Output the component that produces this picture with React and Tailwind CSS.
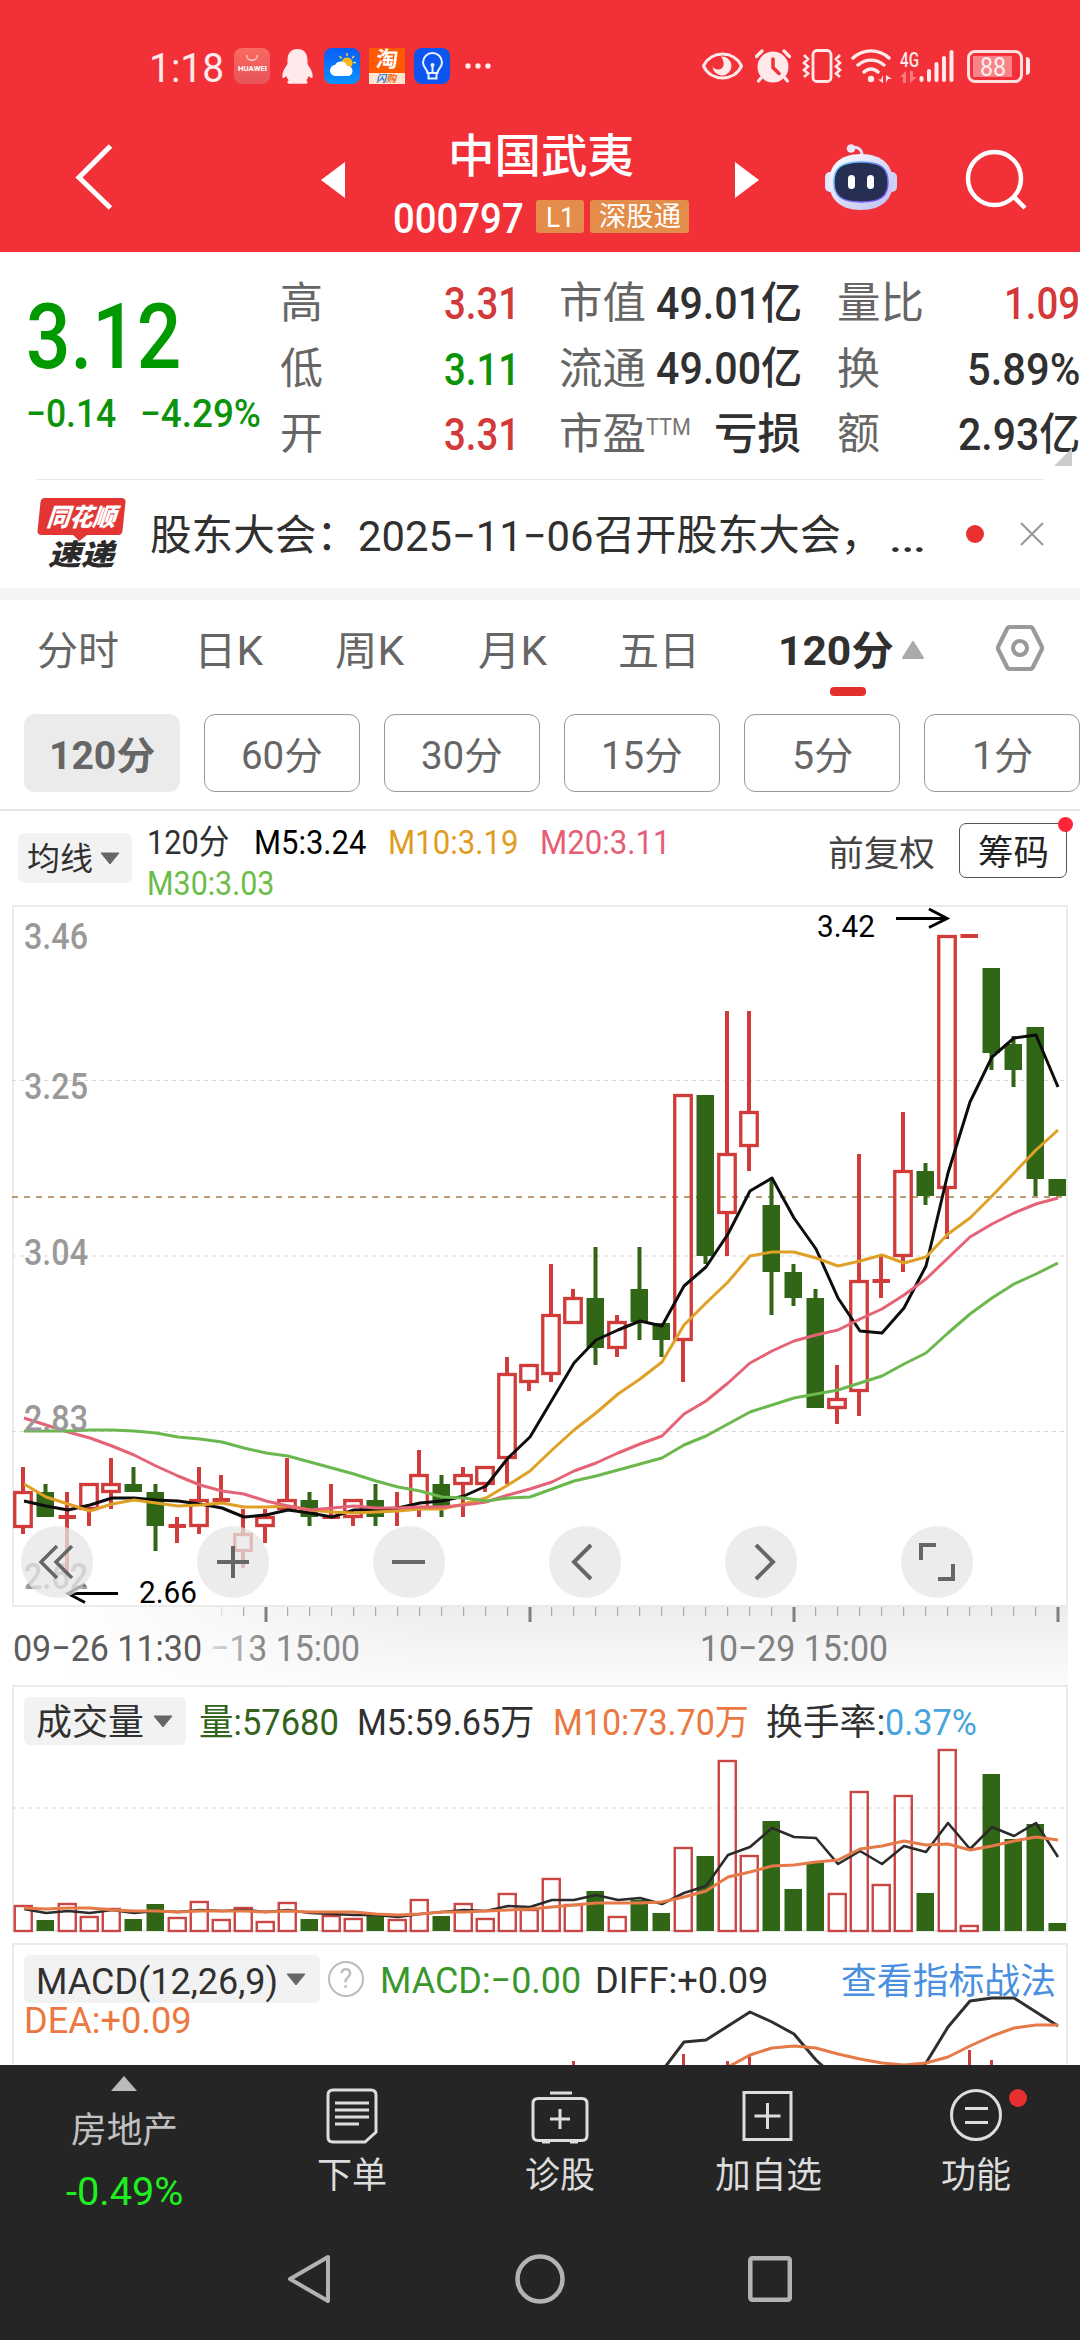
import { useLayoutEffect, useRef, useState } from "react";

// Stretches or squeezes one line of text to the width of its own box
function Fit({ className = "", children }) {
  const box = useRef(null);
  const text = useRef(null);
  const [scale, setScale] = useState(1);

  useLayoutEffect(() => {
    if (text.current.offsetWidth > 0) {
      setScale(box.current.clientWidth / text.current.offsetWidth);
    }
  }, [children]);

  return (
    <div ref={box} className={"shrink-0 whitespace-nowrap leading-none " + className}>
      <span ref={text} className="inline-block origin-left" style={{ transform: `translateY(0.045em) scaleX(${scale})` }}>
        {children}
      </span>
    </div>
  );
}

// [type, high, top, bottom, low], type: r = up, g = down, x = cross
const candles = [
  ["r", 1467, 1491, 1528, 1534], ["g", 1484, 1492, 1517, 1517], ["x", 1492, 1517, 1517, 1575],
  ["r", 1483, 1483, 1510, 1526], ["r", 1458, 1483, 1493, 1509], ["g", 1467, 1484, 1492, 1492],
  ["g", 1484, 1492, 1526, 1551], ["x", 1517, 1526, 1526, 1543], ["r", 1467, 1499, 1527, 1534],
  ["x", 1475, 1500, 1500, 1501], ["r", 1509, 1533, 1552, 1568], ["r", 1509, 1516, 1527, 1543],
  ["r", 1458, 1499, 1510, 1510], ["g", 1492, 1500, 1517, 1526], ["x", 1484, 1517, 1517, 1518],
  ["r", 1499, 1499, 1518, 1526], ["g", 1484, 1500, 1517, 1526], ["x", 1492, 1509, 1509, 1526],
  ["r", 1450, 1474, 1509, 1517], ["g", 1475, 1484, 1508, 1517], ["r", 1467, 1474, 1485, 1517],
  ["r", 1466, 1466, 1485, 1492], ["r", 1357, 1373, 1459, 1484], ["r", 1364, 1364, 1383, 1391],
  ["r", 1264, 1314, 1375, 1382], ["r", 1289, 1297, 1324, 1324], ["g", 1247, 1298, 1348, 1365],
  ["r", 1315, 1321, 1349, 1357], ["g", 1247, 1289, 1322, 1340], ["g", 1323, 1323, 1340, 1357],
  ["r", 1094, 1094, 1341, 1382], ["g", 1095, 1095, 1256, 1264], ["r", 1011, 1153, 1214, 1256],
  ["r", 1011, 1111, 1147, 1171], ["g", 1178, 1205, 1272, 1315], ["g", 1264, 1272, 1298, 1306],
  ["g", 1289, 1298, 1408, 1408], ["r", 1365, 1398, 1409, 1424], ["r", 1154, 1280, 1392, 1416],
  ["x", 1255, 1281, 1281, 1298], ["r", 1112, 1170, 1257, 1272], ["g", 1163, 1171, 1196, 1205],
  ["r", 935, 935, 1189, 1239], ["x", 936, 936, 936, 936], ["g", 968, 968, 1053, 1070],
  ["g", 1036, 1044, 1070, 1087], ["g", 1027, 1027, 1179, 1196], ["g", 1179, 1179, 1196, 1196],
];

const ma5 = [1501, 1506, 1510, 1505, 1498, 1498, 1500, 1501, 1504, 1508, 1517, 1515, 1510, 1513, 1517, 1510, 1509.5, 1508, 1503, 1501, 1496, 1486, 1458, 1437, 1400, 1363, 1340, 1330, 1321, 1326, 1286, 1267, 1234, 1191, 1178, 1218, 1249, 1298, 1331, 1333, 1308, 1266, 1173, 1102, 1057, 1038, 1035, 1087];
const ma10 = [1484, 1497, 1504, 1511, 1504, 1500, 1503, 1506, 1505, 1503, 1507, 1507, 1506, 1510, 1512, 1513, 1512, 1511, 1509, 1509, 1504, 1498, 1485, 1471, 1450, 1430, 1413, 1394, 1379, 1362, 1325, 1303, 1282, 1256, 1252, 1252, 1258, 1266, 1261, 1255, 1263, 1257, 1234, 1218, 1196, 1173, 1150, 1130];
const ma20 = [1418, 1425, 1432, 1438, 1446, 1455, 1466, 1476, 1485, 1491, 1494, 1501, 1506, 1510, 1508, 1506, 1508, 1508, 1507, 1507, 1505, 1502, 1495, 1489, 1482, 1471, 1463, 1453, 1444, 1436, 1414, 1401, 1383, 1363, 1351, 1341, 1335, 1330, 1319, 1309, 1295, 1279, 1258, 1237, 1224, 1213, 1204, 1198];
const ma30 = [1431, 1431, 1431, 1430, 1430, 1431, 1433, 1437, 1439, 1442, 1448, 1453, 1456, 1462, 1468, 1474, 1481, 1487, 1491, 1497, 1498, 1501, 1498, 1497, 1489, 1481, 1476, 1470, 1464, 1458, 1445, 1436, 1424, 1412, 1405, 1398, 1394, 1390, 1383, 1376, 1364, 1353, 1333, 1314, 1298, 1284, 1274, 1263];

const volumes = [1905, 1920, 1903, 1916, 1908, 1919, 1904, 1917, 1901, 1919, 1907, 1921, 1902, 1919, 1915, 1918, 1916, 1919, 1899, 1916, 1903, 1918, 1893, 1909, 1878, 1904, 1891, 1916, 1900, 1913, 1847, 1856, 1760, 1855, 1821, 1889, 1862, 1893, 1791, 1884, 1795, 1893, 1749, 1925, 1774, 1839, 1824, 1923];
const vol5 = [1909, 1913, 1911, 1913, 1910, 1913, 1911, 1912, 1910, 1911, 1910, 1912, 1910, 1913, 1914, 1915, 1915, 1917, 1914, 1912, 1910, 1911, 1906, 1907, 1900, 1900, 1895, 1900, 1898, 1904, 1893, 1886, 1855, 1847, 1828, 1837, 1838, 1864, 1851, 1864, 1846, 1852, 1823, 1849, 1827, 1836, 1823, 1857];
const vol10 = [1908, 1909, 1908, 1908, 1910, 1911, 1911, 1912, 1911, 1911, 1911, 1912, 1911, 1912, 1912, 1912, 1914, 1915, 1914, 1912, 1912, 1911, 1910, 1909, 1907, 1905, 1903, 1903, 1903, 1902, 1897, 1891, 1877, 1872, 1866, 1865, 1862, 1860, 1849, 1846, 1841, 1845, 1844, 1850, 1846, 1841, 1837, 1840];
const diff = [2071, 2042, 2040, 2026, 2012, 2022, 2034, 2060, 2080, 2090, 2090, 2085, 2063, 2027, 2001, 1998, 1998, 2012, 2026];
const dea = [2067, 2055, 2048, 2046, 2048, 2054, 2059, 2063, 2065, 2063, 2057, 2046, 2036, 2028, 2025, 2025];
const macdBars = [[25, 2061], [30, 2054], [32, 2061], [33, 2055], [43, 2050], [44, 2060]];

const centerX = (i) => 23 + i * 22;
const toPoints = (values, from = 0) => values.map((y, i) => `${24 + (i + from) * 22},${y}`).join(" ");

function Line({ values, from, color, width = 3 }) {
  return <polyline points={toPoints(values, from)} fill="none" stroke={color} strokeWidth={width} strokeLinejoin="round" />;
}

function Candle({ data, index }) {
  const [type, high, top, bottom, low] = data;
  const x = centerX(index);
  if (type === "g") {
    return (
      <g fill="#306615">
        <rect x={x - 1.5} y={high} width="4" height={low - high} />
        <rect x={x - 8.5} y={top} width="17.5" height={bottom - top} />
      </g>
    );
  }
  if (type === "x") {
    return (
      <g fill="#d13c3b">
        <rect x={x - 2} y={high} width="4" height={low - high} />
        <rect x={x - 8.5} y={top - 2} width="17.5" height="4" />
      </g>
    );
  }
  return (
    <g>
      <rect x={x - 2} y={high} width="4" height={top - high} fill="#d13c3b" />
      <rect x={x - 2} y={bottom} width="4" height={low - bottom} fill="#d13c3b" />
      <rect x={x - 8.25} y={top + 1.5} width="16.5" height={bottom - top - 3} fill="none" stroke="#d13c3b" strokeWidth="3.300" />
    </g>
  );
}

function StatusBar() {
  return (
    <div className="flex h-[132px] items-center pl-[149px]">
      <Fit className="w-[75px] text-[41px] text-[#ffe9ea]">1:18</Fit>
      <div className="ml-[10px] flex h-9 w-9 flex-col items-center rounded-lg bg-gradient-to-b from-[#f96a60] to-[#e8545a]">
        <svg width="14" height="8" viewBox="0 0 14 8" className="mt-[6px]">
          <path d="M1.5 1c0 7 11 7 11 0" fill="none" stroke="#ffd2cf" strokeWidth="1.3" />
        </svg>
        <Fit className="mt-1 w-[29px] text-[7px] font-bold text-white">HUAWEI</Fit>
      </div>
      <svg width="31" height="35" viewBox="0 0 31 35" className="ml-3">
        <path d="M15.500 0C9 0 5.500 4.500 5.500 11v4C3 19 .3 22.500.3 27c0 3 1.700 2.500 4 0 .6 2 1.500 3.300 2.700 4.300-2 .7-2.200 3.400 0 3.400h17c2.200 0 2-2.700 0-3.400 1.200-1 2.100-2.300 2.700-4.300 2.300 2.500 4 3 4 0 0-4.500-2.700-8-5.200-12v-4C25.500 4.500 22 0 15.500 0z" fill="#ffe9ea" />
      </svg>
      <svg width="36" height="36" viewBox="0 0 36 36" className="ml-[11px]">
        <defs>
          <linearGradient id="sky" x1="0" y1="0" x2="0" y2="1">
            <stop offset="0" stopColor="#0a5cf5" />
            <stop offset="1" stopColor="#0a93ff" />
          </linearGradient>
        </defs>
        <rect width="36" height="36" rx="8" fill="url(#sky)" />
        <path d="M23 5v3M15.500 8l2 2.500M30 8l-2 2.300M29 14.500l3 .3M28.500 18.500" stroke="#ffd34d" strokeWidth="1.400" />
        <circle cx="23" cy="15" r="5.500" fill="#ffb81c" />
        <path d="M12 28a5.500 5.500 0 0 1-1-11 6.500 6.500 0 0 1 12 1 5 5 0 1 1 1 10z" fill="#fff" />
      </svg>
      <div className="ml-[9px] flex h-9 w-9 flex-col items-center bg-gradient-to-b from-[#ff5a00] from-70% to-[#ffe6cf] to-70%">
        <span className="h-[25px] -skew-x-6 text-[22px] font-bold leading-[24px] text-white">淘</span>
        <span className="-skew-x-12 text-[10px] font-bold leading-[11px] text-[#f06a1a]">
          <span className="text-[#2a7be0]">闪</span>购
        </span>
      </div>
      <svg width="36" height="36" viewBox="0 0 36 36" className="ml-[9px]" fill="none" stroke="#e6f3ff">
        <rect width="36" height="36" rx="8" fill="#0d55ee" stroke="none" />
        <path d="M13.500 25c0-4-4.500-5.500-4.500-10.500a9.500 9.500 0 0 1 19 0c0 5-4.500 6.500-4.500 10.500z" strokeWidth="2" />
        <path d="M14.500 26v4.500h8V26M18.500 18v7" strokeWidth="2" />
        <circle cx="18.500" cy="17" r="2" fill="#e6f3ff" stroke="none" />
      </svg>
      <svg width="26" height="6" viewBox="0 0 26 6" className="ml-[15px]" fill="#ffe9ea">
        <circle cx="3" cy="3" r="2.700" />
        <circle cx="13" cy="3" r="2.700" />
        <circle cx="23" cy="3" r="2.700" />
      </svg>

      <svg width="41" height="28" viewBox="0 0 41 28" className="ml-[211px]" fill="none" stroke="#ffe9ea">
        <path d="M1.500 14C9-2 32-2 39.500 14 32 30 9 30 1.500 14z" strokeWidth="3" />
        <path d="M19 4.500a9.500 9.500 0 1 1-8.500 9.500c1 3.500 6 4.500 9 2.500s3-7-.5-12z" fill="#ffe9ea" stroke="none" />
      </svg>
      <svg width="36" height="34" viewBox="0 0 36 34" className="ml-3" fill="none" stroke="#ffe9ea" strokeLinecap="round">
        <circle cx="18" cy="18" r="15.500" fill="#ffe9ea" stroke="none" />
        <path d="M1.500 7.500 7 2M34.500 7.500 29 2M6 29l-2.500 3M30 29l2.500 3" strokeWidth="3.200" />
        <path d="M18 10v8.500l6 6" stroke="#f13037" strokeWidth="3.500" />
      </svg>
      <svg width="40" height="34" viewBox="0 0 40 34" className="ml-[11px]" fill="none" stroke="#ffe9ea" strokeWidth="2.800">
        <rect x="11" y="1.500" width="18" height="31" rx="4" />
        <path d="M2 6l4 4-4 4 4 3.500-4 3.500 4 3.500-4 3.500M38 6l-4 4 4 4-4 3.500 4 3.500-4 3.500 4 3.500" strokeWidth="2.600" />
      </svg>
      <svg width="42" height="34" viewBox="0 0 42 34" className="ml-[9px]" fill="none" stroke="#ffe9ea" strokeWidth="3.400" strokeLinecap="round">
        <path d="M2 9c10-9.500 26-9.500 36 0M7 16c8-6.500 18-6.500 26 0M13 23c4-4 10-4 14 0" />
        <circle cx="20" cy="30" r="3.200" fill="#ffe9ea" stroke="none" />
        <path d="M32 26v8l-5-3.500h3zM35 34v-8l6 4h-4z" fill="#ffe9ea" stroke="none" />
      </svg>
      <div className="ml-[7px] flex h-[34px] w-[19px] flex-col justify-between">
        <Fit className="w-[19px] text-[20px] font-medium text-[#ffe9ea]">4G</Fit>
        <svg width="17" height="12" viewBox="0 0 17 12" fill="#f97a7e">
          <path d="M6 12V0L0 6h3v6zM10 0v12l7-6h-4V0z" />
        </svg>
      </div>
      <svg width="36" height="34" viewBox="0 0 36 34" stroke="#ffe9ea" strokeWidth="4" strokeLinecap="round">
        <path d="M2.500 29v2M10 22v9M17.500 15v16M25 9v22M32.500 3v28" />
      </svg>
      <div className="ml-3 flex h-[33px] w-14 items-center rounded-lg border-[3px] border-[#ffdfe0] pl-[3px]">
        <div className="flex h-[21px] w-[39px] items-center justify-center bg-[#f98388]">
          <Fit className="w-[26px] text-[25px] text-[#fff0f0]">88</Fit>
        </div>
      </div>
      <div className="ml-[3px] h-[18px] w-1 rounded-r bg-[#ffe9ea]"></div>
    </div>
  );
}

function Robot() {
  return (
    <svg width="72" height="66" viewBox="0 0 72 66" className="mt-[5px] ml-[66px] shrink-0">
      <defs>
        <linearGradient id="shell" x1="0" y1="0" x2="1" y2="1">
          <stop offset="0" stopColor="#ffffff" />
          <stop offset="1" stopColor="#b9bdf3" />
        </linearGradient>
        <linearGradient id="rim" x1="0" y1="0" x2="1" y2="1">
          <stop offset="0" stopColor="#63d2ff" />
          <stop offset="1" stopColor="#7b35f0" />
        </linearGradient>
      </defs>
      <path d="M26 3.500c6-1 11 1 11 8" fill="none" stroke="#e3dcf6" strokeWidth="3" />
      <circle cx="26" cy="4.500" r="4.300" fill="#ece6fb" />
      <rect x="0" y="28" width="10" height="20" rx="5" fill="#e4e4fb" />
      <rect x="62" y="28" width="10" height="20" rx="5" fill="#cfd0f6" />
      <path d="M36 10c22 0 32 12 32 28S58 66 36 66 4 54 4 38s10-28 32-28z" fill="url(#shell)" />
      <path d="M36 18c20 0 27 6 27 20s-7 20-27 20S9 52 9 38s7-20 27-20z" fill="#262f52" stroke="url(#rim)" strokeWidth="1.500" />
      <rect x="23" y="31" width="7" height="14" rx="3.500" fill="#fff" />
      <rect x="42" y="31" width="7" height="14" rx="3.500" fill="#fff" />
    </svg>
  );
}

function Header() {
  return (
    <div className="h-[252px] bg-[#f13037] text-white">
      <StatusBar />
      <div className="flex h-[120px] items-start">
        <svg width="38" height="66" viewBox="0 0 38 66" className="mt-3 ml-[75px] shrink-0">
          <path d="M35.500 2 4 33.500 35.500 64" fill="none" stroke="#fff" strokeWidth="5" />
        </svg>
        <svg width="24" height="36" viewBox="0 0 24 36" className="mt-[30px] ml-[208px] shrink-0">
          <path d="M24 0v36L0 18z" fill="#fff" />
        </svg>
        <div className="ml-[48px] flex w-[296px] flex-col items-center">
          <Fit className="-mt-px h-[46px] w-[186px] text-[46px] font-medium">中国武夷</Fit>
          <div className="mt-[18px] flex items-center">
            <Fit className="w-[131px] text-[43px] font-medium">000797</Fit>
            <div className="ml-[12px] flex h-[33px] w-12 items-center justify-center rounded-[3px] bg-[#e48c49]">
              <Fit className="w-[29px] text-[28px]">L1</Fit>
            </div>
            <div className="ml-[6px] flex h-[33px] w-[99px] items-center justify-center rounded-[3px] bg-[#e48c49]">
              <Fit className="w-[82px] text-[27px]">深股通</Fit>
            </div>
          </div>
        </div>
        <svg width="24" height="36" viewBox="0 0 24 36" className="mt-[30px] ml-[46px] shrink-0">
          <path d="M0 0v36l24-18z" fill="#fff" />
        </svg>
        <div className="mt-[7px]">
          <Robot />
        </div>
        <svg width="62" height="62" viewBox="0 0 62 62" className="mt-[17px] ml-[68px] shrink-0" fill="none" stroke="#fff">
          <circle cx="29.500" cy="29.500" r="26.500" strokeWidth="4.500" />
          <path d="M49 48l11 11" strokeWidth="4.500" />
        </svg>
      </div>
    </div>
  );
}

function Quote() {
  const label = "w-[43px] text-[43px] text-[#666]";
  const wideLabel = "w-[87px] text-[43px] text-[#666]";
  return (
    <div className="relative flex h-[227px]">
      <div className="flex w-[280px] flex-col pl-[26px]">
        <Fit className="mt-[37px] h-[90px] w-[155px] text-[90px] font-medium text-[#009a00]">3.12</Fit>
        <div className="mt-[14px] flex text-[#0b930b]">
          <Fit className="w-[90px] text-[39px] font-medium">−0.14</Fit>
          <Fit className="ml-[24px] w-[121px] text-[39px] font-medium">−4.29%</Fit>
        </div>
      </div>
      <div className="flex w-[240px] flex-col pt-[17px]">
        <div className="flex h-[65.500px] items-center justify-between">
          <Fit className={label}>高</Fit>
          <Fit className="w-[76px] text-[45px] font-medium text-[#d43838]">3.31</Fit>
        </div>
        <div className="flex h-[65.500px] items-center justify-between">
          <Fit className={label}>低</Fit>
          <Fit className="w-[76px] text-[45px] font-medium text-[#0b930b]">3.11</Fit>
        </div>
        <div className="flex h-[65.500px] items-center justify-between">
          <Fit className={label}>开</Fit>
          <Fit className="w-[76px] text-[45px] font-medium text-[#d43838]">3.31</Fit>
        </div>
      </div>
      <div className="ml-[39px] flex w-[243px] flex-col pt-[17px] text-[#303030]">
        <div className="flex h-[65.500px] items-center justify-between">
          <Fit className={wideLabel}>市值</Fit>
          <Fit className="w-[146px] text-[44px] font-medium">49.01亿</Fit>
        </div>
        <div className="flex h-[65.500px] items-center justify-between">
          <Fit className={wideLabel}>流通</Fit>
          <Fit className="w-[146px] text-[44px] font-medium">49.00亿</Fit>
        </div>
        <div className="flex h-[65.500px] items-center">
          <Fit className={wideLabel}>市盈</Fit>
          <Fit className="mb-[13px] w-[45px] text-[24px] text-[#777]">TTM</Fit>
          <Fit className="ml-[23px] w-[87px] text-[43px] font-medium">亏损</Fit>
        </div>
      </div>
      <div className="ml-[35px] flex w-[243px] flex-col pt-[17px] text-[#303030]">
        <div className="flex h-[65.500px] items-center justify-between">
          <Fit className={wideLabel}>量比</Fit>
          <Fit className="w-[76px] text-[45px] font-medium text-[#d43838]">1.09</Fit>
        </div>
        <div className="flex h-[65.500px] items-center justify-between">
          <Fit className={label}>换</Fit>
          <Fit className="w-[113px] text-[45px] font-medium">5.89%</Fit>
        </div>
        <div className="flex h-[65.500px] items-center justify-between">
          <Fit className={label}>额</Fit>
          <Fit className="w-[122px] text-[44px] font-medium">2.93亿</Fit>
        </div>
      </div>
      <svg width="18" height="18" viewBox="0 0 18 18" className="absolute right-2 bottom-[13px]">
        <path d="M18 0v18H0z" fill="#ccc" />
      </svg>
    </div>
  );
}

function News() {
  return (
    <div className="flex h-[108px] items-center">
      <div className="ml-[37px] flex h-[72px] w-[88px] flex-col items-center">
        <div className="relative flex h-[37px] w-[85px] -skew-x-6 items-center justify-center rounded-[4px] bg-[#e43535]">
          <Fit className="w-[69px] text-[25px] font-black text-white italic">同花顺</Fit>
          <svg width="14" height="6" viewBox="0 0 14 6" className="absolute top-[37px] left-[36px]">
            <path d="M0 0h14L7 6z" fill="#e43535" />
          </svg>
        </div>
        <Fit className="mt-[5px] w-[66px] text-[29px] font-black text-[#2b2b2b] italic">速递</Fit>
      </div>
      <div className="mt-px ml-[25px] flex w-[779px] text-[#303030]">
        <Fit className="w-[208px] text-[42px]">股东大会：</Fit>
        <Fit className="w-[236px] text-[43px]">2025−11−06</Fit>
        <Fit className="w-[288px] text-[42px]">召开股东大会，</Fit>
        <Fit className="ml-[6px] w-[38px] text-[44px]">…</Fit>
      </div>
      <div className="ml-[37px] h-[18px] w-[18px] rounded-full bg-[#e93030]"></div>
      <svg width="24" height="24" viewBox="0 0 24 24" className="ml-9">
        <path d="M1 1l22 22M23 1 1 23" stroke="#999" strokeWidth="2.200" />
      </svg>
    </div>
  );
}

function Tabs() {
  return (
    <div className="h-[114px] text-[40px] text-[#666]">
      <div className="flex h-[87px] items-end">
        <div className="flex h-[74px] items-center">
          <Fit className="ml-[37px] w-[82px]">分时</Fit>
          <Fit className="ml-[75px] w-[69px]">日K</Fit>
          <Fit className="ml-[72px] w-[69px]">周K</Fit>
          <Fit className="ml-[74px] w-[69px]">月K</Fit>
          <Fit className="ml-[71px] w-[82px]">五日</Fit>
          <Fit className="ml-[78px] w-[116px] font-bold text-[#303030]">120分</Fit>
          <svg width="22" height="18" viewBox="0 0 22 18" className="ml-[8px]">
            <path d="M11 1l10 16H1z" fill="#aaa" stroke="#aaa" strokeWidth="2" strokeLinejoin="round" />
          </svg>
          <svg width="48" height="46" viewBox="0 0 48 46" className="mb-1 ml-[72px]" fill="none" stroke="#999" strokeWidth="4.200" strokeLinejoin="round">
            <path d="M14 2h20q2 0 3 2l8.500 17q1 2 0 4L37 42q-1 2-3 2H14q-2 0-3-2L2.500 25q-1-2 0-4L11 4q1-2 3-2z" />
            <circle cx="24" cy="23" r="7" />
          </svg>
        </div>
      </div>
      <div className="ml-[830px] h-[9px] w-9 rounded-[4px] bg-[#e3302f]"></div>
    </div>
  );
}

function Periods() {
  const button = "flex h-[78px] w-[156px] shrink-0 items-center justify-center rounded-[11px] border border-[#999] pt-0.5";
  return (
    <div className="flex h-[97px] gap-6 border-b-2 border-[#e6e6e6] pl-6 text-[38px] text-[#666]">
      <div className="flex h-[78px] w-[156px] shrink-0 items-center justify-center rounded-[11px] bg-[#ebebeb] pt-0.5">
        <Fit className="w-[106px] font-bold">120分</Fit>
      </div>
      <div className={button}><Fit className="w-[82px]">60分</Fit></div>
      <div className={button}><Fit className="w-[82px]">30分</Fit></div>
      <div className={button}><Fit className="w-[82px]">15分</Fit></div>
      <div className={button}><Fit className="w-[61px]">5分</Fit></div>
      <div className={button}><Fit className="w-[61px]">1分</Fit></div>
    </div>
  );
}

function Caret({ className }) {
  return (
    <svg width="20" height="13" viewBox="0 0 20 13" className={className}>
      <path d="M1 1h18l-9 11z" fill="#666" stroke="#666" strokeLinejoin="round" />
    </svg>
  );
}

function AverageBar() {
  return (
    <div className="flex h-[93px]">
      <div className="mt-[22px] ml-[18px] flex h-[50px] w-[114px] items-center rounded-[7px] bg-[#f2f2f2]">
        <Fit className="ml-[9px] w-[66px] text-[32px] text-[#303030]">均线</Fit>
        <Caret className="ml-[7px]" />
      </div>
      <div className="mt-[8px] ml-[15px] flex w-[660px] flex-col text-[34px]">
        <div className="flex h-[41px] items-center">
          <Fit className="w-[82px] text-[#303030]">120分</Fit>
          <Fit className="ml-[25px] w-[112px] text-black">M5:3.24</Fit>
          <Fit className="ml-[22px] w-[130px] text-[#df9c1f]">M10:3.19</Fit>
          <Fit className="ml-[22px] w-[130px] text-[#e75d75]">M20:3.11</Fit>
        </div>
        <div className="flex h-[41px] items-center">
          <Fit className="w-[127px] text-[#6bbd49]">M30:3.03</Fit>
        </div>
      </div>
      <Fit className="mt-[24px] ml-[21px] w-[107px] text-[35px] text-[#444]">前复权</Fit>
      <div className="relative mt-[12px] ml-[24px] flex h-[55px] w-[108px] items-center justify-center rounded-[7px] border border-[#555] pt-0.5">
        <Fit className="w-[71px] text-[35px] text-[#222]">筹码</Fit>
        <div className="absolute -top-[7px] -right-[7px] h-[15px] w-[15px] rounded-full bg-[#ff2438]"></div>
      </div>
    </div>
  );
}

function RoundButton({ children }) {
  return (
    <div className="flex h-[72px] w-[72px] items-center justify-center rounded-full bg-[#e5e5e5]/75">
      <svg width="44" height="44" viewBox="0 0 44 44" fill="none" stroke="#666" strokeWidth="4">
        {children}
      </svg>
    </div>
  );
}

function PriceChart() {
  return (
    <div className="relative h-[702px]">
      <svg width="1080" height="702" viewBox="0 905 1080 702" className="block overflow-visible">
        <rect x="13" y="906" width="1054" height="700" fill="none" stroke="#ebebeb" strokeWidth="2" />
        <g stroke="#d9d9d9" strokeDasharray="4 4">
          <path d="M12 1080.500h1055M12 1431.500h1055" />
          <path d="M12 1256h1055" stroke="#ebebeb" strokeWidth="2" />
        </g>
        <path d="M12 1197h1055" stroke="#b89c75" strokeWidth="2" strokeDasharray="6 6" />
        {candles.map((data, i) => (
          <Candle key={i} data={data} index={i} />
        ))}
        <Line values={ma5} color="#0d0d0d" />
        <Line values={ma10} color="#dfa026" />
        <Line values={ma20} color="#e56377" />
        <Line values={ma30} color="#6bb84f" />
        <g fill="#999" fontSize="36.500" fontWeight="500">
          <text x="24" y="949" textLength="64" lengthAdjust="spacingAndGlyphs">3.46</text>
          <text x="24" y="1099" textLength="64" lengthAdjust="spacingAndGlyphs">3.25</text>
          <text x="24" y="1265" textLength="64" lengthAdjust="spacingAndGlyphs">3.04</text>
          <text x="24" y="1431" textLength="64" lengthAdjust="spacingAndGlyphs">2.83</text>
          <text x="24" y="1589" textLength="64" lengthAdjust="spacingAndGlyphs">2.62</text>
        </g>
        <g fill="#000" fontSize="31">
          <text x="817" y="937" textLength="58" lengthAdjust="spacingAndGlyphs">3.42</text>
          <text x="139" y="1603" textLength="58" lengthAdjust="spacingAndGlyphs">2.66</text>
        </g>
        <g fill="none" stroke="#000" strokeWidth="3">
          <path d="M896 918.500h50M929 909l18 9.500-18 9" />
          <path d="M118 1593.500H68M85 1584l-17 9.500 17 9" />
        </g>
      </svg>
      <div className="absolute top-[621px] left-[21px] flex gap-[104px]">
        <RoundButton><path d="M22 6 6 22l16 16M37 6 21 22l16 16" strokeWidth="3.500" /></RoundButton>
        <RoundButton><path d="M6 22h32M22 6v32" /></RoundButton>
        <RoundButton><path d="M5 22h33" /></RoundButton>
        <RoundButton><path d="M28 5 11 22l17 17" /></RoundButton>
        <RoundButton><path d="M17 5l17 17-17 17" /></RoundButton>
        <RoundButton><path d="M6 20V5h15M23 39h15V24" /></RoundButton>
      </div>
    </div>
  );
}

function TimeAxis() {
  const ticks = Array.from({ length: 39 }, (_, i) => i + 9);
  return (
    <svg width="1080" height="78" viewBox="0 1607 1080 78" className="block">
      <defs>
        <linearGradient id="shade" x1="0" y1="0" x2="0" y2="1">
          <stop offset="0" stopColor="#ededed" />
          <stop offset="1" stopColor="#fbfbfb" />
        </linearGradient>
        <linearGradient id="fade" x1="0" y1="0" x2="1" y2="0">
          <stop offset="0.120" stopColor="#fff" />
          <stop offset="1" stopColor="#fff" stopOpacity="0" />
        </linearGradient>
        <linearGradient id="fadeText" x1="0" y1="0" x2="1" y2="0">
          <stop offset="0" stopColor="#ddd" />
          <stop offset="0.350" stopColor="#888" />
        </linearGradient>
      </defs>
      <rect x="12" y="1607" width="1056" height="78" fill="url(#shade)" />
      <rect x="12" y="1607" width="420" height="78" fill="url(#fade)" />
      {ticks.map((i) =>
        i % 12 === 11 ? (
          <rect key={i} x={centerX(i) - 0.5} y="1607" width="3" height="15" fill="#808080" />
        ) : (
          <rect key={i} x={centerX(i)} y="1607" width="1.200" height="9" fill={i === 9 ? "#ddd" : "#aaa"} />
        )
      )}
      <g fontSize="37" fill="#808080">
        <text x="13" y="1660.500" fill="#5c5c5c" textLength="189" lengthAdjust="spacingAndGlyphs">09−26 11:30</text>
        <text x="210" y="1660.500" fill="url(#fadeText)" textLength="150" lengthAdjust="spacingAndGlyphs">−13 15:00</text>
        <text x="700" y="1660.500" textLength="188" lengthAdjust="spacingAndGlyphs">10−29 15:00</text>
      </g>
    </svg>
  );
}

function VolumePanel() {
  return (
    <div className="relative h-[258px]">
      <svg width="1080" height="258" viewBox="0 1685 1080 258" className="absolute top-0 left-0">
        <path d="M13 1931v-245h1054v245z" fill="none" stroke="#ebebeb" strokeWidth="2" />
        <path d="M12 1808h1055" stroke="#e8e8e8" strokeWidth="2" strokeDasharray="4 4" />
        {volumes.map((top, i) =>
          candles[i][0] === "g" ? (
            <rect key={i} x={centerX(i) - 8.5} y={top} width="17.500" height={1931 - top} fill="#306615" />
          ) : (
            <rect key={i} x={centerX(i) - 8.25} y={top + 1} width="17" height={1930 - top} fill="none" stroke="#c94645" strokeWidth="2.400" />
          )
        )}
        <Line values={vol5} color="#2b2b2b" width={2.6} />
        <Line values={vol10} color="#e57a48" />
      </svg>
      <div className="relative flex items-center pt-3 pl-6 text-[36.500px]">
        <div className="flex h-12 w-[162px] items-center rounded-[6px] bg-[#f2f2f2]">
          <Fit className="ml-[12px] w-[108px] text-[36px] text-[#303030]">成交量</Fit>
          <Caret className="ml-[9px]" />
        </div>
        <Fit className="ml-[13px] w-[140px] text-[#33621b]">量:57680</Fit>
        <Fit className="ml-[18px] w-[177px] text-[#303030]">M5:59.65万</Fit>
        <Fit className="ml-[19px] w-[196px] text-[#ea7840]">M10:73.70万</Fit>
        <Fit className="ml-[17px] w-[119px] text-[#303030]">换手率:</Fit>
        <Fit className="w-[92px] text-[#46a5dc]">0.37%</Fit>
      </div>
    </div>
  );
}

function MacdPanel() {
  return (
    <div className="relative h-[122px] overflow-hidden">
      <svg width="1080" height="122" viewBox="0 1943 1080 122" className="absolute top-0 left-0">
        <path d="M13 2070v-126h1054v126" fill="none" stroke="#ebebeb" strokeWidth="2" />
        {macdBars.map(([i, top]) => (
          <rect key={i} x={centerX(i) - 1} y={top} width="3" height={2070 - top} fill="#c8403f" />
        ))}
        <Line values={diff} from={29} color="#2f2f2f" />
        <Line values={dea} from={32} color="#e57a48" />
      </svg>
      <div className="relative flex h-[60px] items-end pl-6 text-[37px] text-[#303030]">
        <div className="flex h-12 w-[296px] items-center rounded-[6px] bg-[#f2f2f2]">
          <Fit className="ml-[12px] w-[242px]">MACD(12,26,9)</Fit>
          <Caret className="ml-[8px]" />
        </div>
        <div className="mb-[6px] ml-[8px] flex h-9 w-9 items-center justify-center rounded-full border-2 border-[#bbb] text-[27px] leading-none text-[#bbb]">?</div>
        <Fit className="mb-[6px] ml-[16px] w-[201px] text-[#3a962b]">MACD:−0.00</Fit>
        <Fit className="mb-[6px] ml-[14px] w-[173px]">DIFF:+0.09</Fit>
        <Fit className="mb-[5px] ml-[73px] w-[215px] text-[36px] text-[#4a8fe0]">查看指标战法</Fit>
      </div>
      <Fit className="relative -mt-[3px] ml-[24px] w-[168px] text-[37px] text-[#ea7840]">DEA:+0.09</Fit>
    </div>
  );
}

function BottomItem({ label, children, width }) {
  return (
    <div className="flex w-[208px] flex-col items-center">
      <svg width="60" height="60" viewBox="0 0 60 60" className="mt-[20px]" fill="none" stroke="#ddd" strokeWidth="3">
        {children}
      </svg>
      <Fit className={"mt-[11px] text-[36px] text-[#dcdcdc] " + width}>{label}</Fit>
    </div>
  );
}

function BottomBar() {
  return (
    <div className="h-[275px] bg-[#252525]">
      <div className="flex h-[145px]">
        <div className="flex w-[248px] flex-col items-center">
          <svg width="26" height="15" viewBox="0 0 26 15" className="mt-[11px]">
            <path d="M13 0l13 15H0z" fill="#bbb" />
          </svg>
          <Fit className="mt-[20px] w-[107px] text-[36px] text-[#c0c0c0]">房地产</Fit>
          <Fit className="mt-[24px] w-[117px] text-[38px] text-[#1fee1f]">-0.49%</Fit>
        </div>
        <BottomItem label="下单" width="w-[70px]">
          <path d="M11 5h38q5 0 5 5v37l-11 10H11q-5 0-5-5V10q0-5 5-5zM13 18h34M13 25h34M13 32h34M13 39h24" />
        </BottomItem>
        <BottomItem label="诊股" width="w-[70px]">
          <path d="M8 13.500h44q5 0 5 5v32q0 5-5 5H8q-5 0-5-5v-32q0-5 5-5zM20 8h22M30 24v20M20 34h20M12 57h8M40 57h8" />
        </BottomItem>
        <BottomItem label="加自选" width="w-[107px]">
          <path d="M6 7.500h47v47H6zM29.500 18v26M16.500 31h26" />
        </BottomItem>
        <div className="relative">
          <BottomItem label="功能" width="w-[70px]">
            <circle cx="30" cy="30" r="24.500" />
            <path d="M19 23.500h23M19 37.500h23" />
          </BottomItem>
          <div className="absolute top-[24px] left-[137px] h-[18px] w-[18px] rounded-full bg-[#e93030]"></div>
        </div>
      </div>
      <div className="flex h-[138px] items-center pl-[286px]">
        <svg width="46" height="52" viewBox="0 0 46 52" fill="none" stroke="#b3b3b3" strokeWidth="4">
          <path d="M42 4v44L4 26z" strokeLinejoin="round" />
        </svg>
        <svg width="50" height="50" viewBox="0 0 50 50" className="ml-[183px]" fill="none" stroke="#b3b3b3" strokeWidth="4.500">
          <circle cx="25" cy="25" r="22.500" />
        </svg>
        <svg width="44" height="46" viewBox="0 0 44 46" className="ml-[183px]" fill="none" stroke="#b3b3b3" strokeWidth="4.500">
          <rect x="2.300" y="2.300" width="39.500" height="41.500" rx="2" />
        </svg>
      </div>
    </div>
  );
}

export default function App() {
  return (
    <div className="h-[2340px] w-[1080px] overflow-hidden bg-white font-[Roboto,'Noto_Sans_CJK_SC',sans-serif]">
      <Header />
      <Quote />
      <div className="mx-9 h-px bg-[#e8e8e8]"></div>
      <News />
      <div className="h-3 bg-[#f4f4f4]"></div>
      <Tabs />
      <Periods />
      <AverageBar />
      <div className="h-px"></div>
      <PriceChart />
      <TimeAxis />
      <VolumePanel />
      <MacdPanel />
      <BottomBar />
    </div>
  );
}
